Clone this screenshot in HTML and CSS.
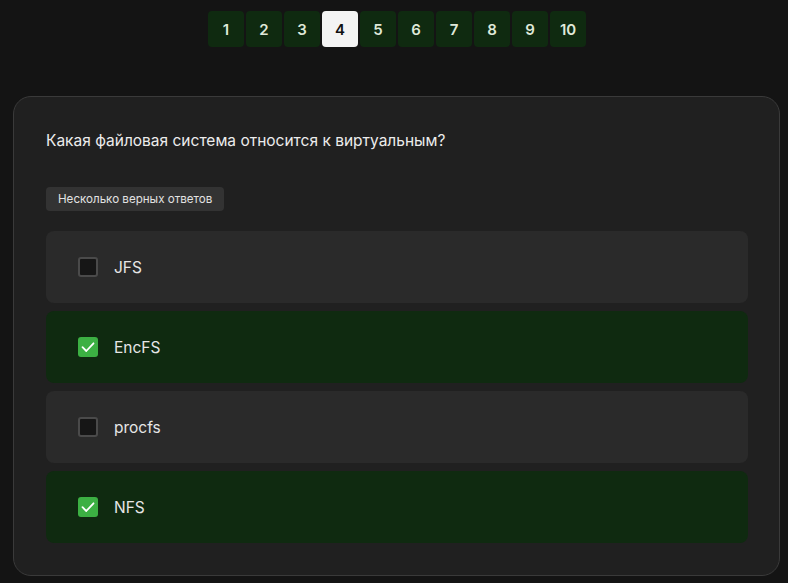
FILE: index.html
```html
<!DOCTYPE html>
<html lang="ru">
<head>
<meta charset="utf-8">
<link rel="stylesheet" href="styles.css">
</head>
<body>
<nav class="pager">
  <span class="page">1</span>
  <span class="page">2</span>
  <span class="page">3</span>
  <span class="page active">4</span>
  <span class="page">5</span>
  <span class="page">6</span>
  <span class="page">7</span>
  <span class="page">8</span>
  <span class="page">9</span>
  <span class="page">10</span>
</nav>
<main class="card">
  <h1 class="question">Какая файловая система относится к виртуальным?</h1>
  <div class="badge">Несколько верных ответов</div>
  <div class="options">
    <div class="option"><span class="box"></span><span class="label">JFS</span></div>
    <div class="option checked"><span class="box"><svg viewBox="0 0 20 20" width="20" height="20"><path d="M4.5 10.2 L8.3 14 L15.5 6.3" fill="none" stroke="#fff" stroke-width="1.8" stroke-linecap="round" stroke-linejoin="round"/></svg></span><span class="label">EncFS</span></div>
    <div class="option"><span class="box"></span><span class="label">procfs</span></div>
    <div class="option checked"><span class="box"><svg viewBox="0 0 20 20" width="20" height="20"><path d="M4.5 10.2 L8.3 14 L15.5 6.3" fill="none" stroke="#fff" stroke-width="1.8" stroke-linecap="round" stroke-linejoin="round"/></svg></span><span class="label">NFS</span></div>
  </div>
</main>
</body>
</html>
```
FILE: styles.css
```css
html, body {
  margin: 0;
  padding: 0;
  background: #141414;
  font-family: Inter, "Noto Sans", sans-serif;
  color: #e6e6e6;
}
body {
  padding: 11px 0 0 0;
}
.pager {
  display: flex;
  justify-content: center;
  gap: 2px;
  padding-left: 6px;
}
.page {
  width: 36px;
  height: 36px;
  border-radius: 4px;
  background: #0f2a10;
  color: #dfe8d8;
  font-weight: 600;
  font-size: 15px;
  display: flex;
  align-items: center;
  justify-content: center;
}
.page.active {
  background: #f4f4f4;
  color: #111;
}
.card {
  margin: 49px 8px 0 13px;
  border: 1px solid #3a3a3a;
  border-radius: 18px;
  background: #202020;
  padding: 32px 31px 32px 32px;
}
.question {
  margin: 0;
  font-size: 15.5px;
  font-weight: 400;
  line-height: 24px;
  color: #ececec;
}
.badge {
  display: inline-block;
  margin-top: 34px;
  background: #333333;
  border-radius: 4px;
  padding: 0 12px;
  height: 24px;
  line-height: 24px;
  font-size: 11.6px;
  color: #e2e2e2;
}
.options {
  margin-top: 20px;
  display: flex;
  flex-direction: column;
  gap: 8px;
}
.option {
  height: 72px;
  border-radius: 8px;
  background: #2a2a2a;
  display: flex;
  align-items: center;
  padding-left: 32px;
  gap: 16px;
}
.option.checked {
  background: #0f2a10;
}
.box {
  width: 20px;
  height: 20px;
  box-sizing: border-box;
  border: 2px solid #4a4a4a;
  background: #161616;
  border-radius: 3px;
  display: flex;
  align-items: center;
  justify-content: center;
}
.option.checked .box {
  border: none;
  background: #3cb043;
}
.box svg {
  display: block;
}
.label {
  font-size: 15.5px;
  color: #e6e6e6;
}
```
